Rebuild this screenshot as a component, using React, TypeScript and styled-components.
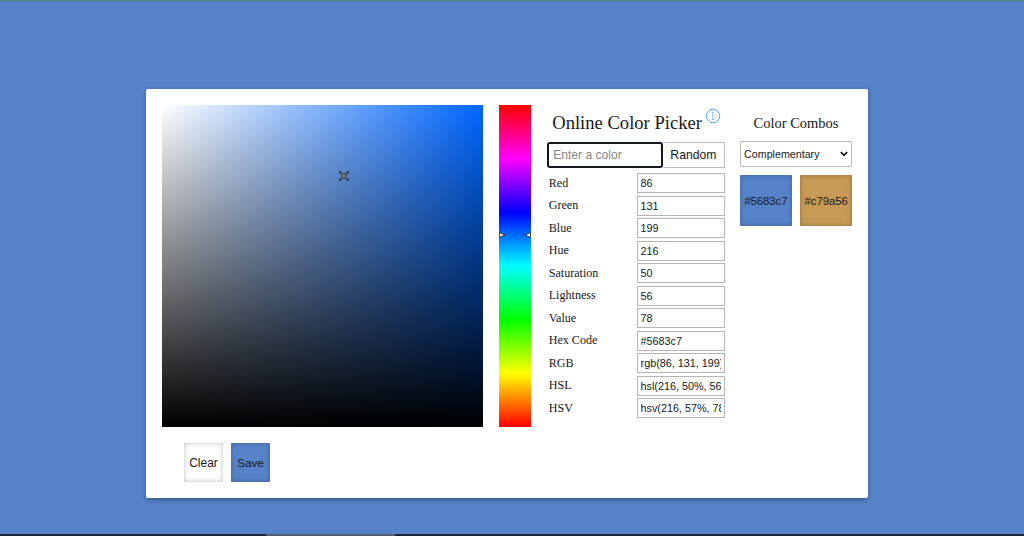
import React from 'react';
import styled, { createGlobalStyle } from 'styled-components';

const sans = '"Liberation Sans", Arial, sans-serif';
const serif = '"Liberation Serif", "Times New Roman", serif';

const GlobalStyle = createGlobalStyle`
  * { box-sizing: border-box; }
  body { margin: 0; background: #5683c7; overflow: hidden; }
`;

const Page = styled.div`
  display: flex;
  flex-direction: column;
  width: 1024px;
  height: 536px;
  border-top: 1px solid #4b8777;
  background: #5683c7;
  color: #181818;
  font-family: ${serif};
`;

const Main = styled.main`
  flex: 1;
  padding: 88.4px 0 0 145.5px;
`;

const Card = styled.section`
  width: 722.5px;
  height: 408.8px;
  padding: 16px;
  background: #fff;
  border-radius: 2px;
  box-shadow: 0 2px 5px rgba(0, 0, 0, 0.32);
`;

const Columns = styled.div`
  display: flex;
  align-items: flex-start;
`;

const Shade = styled.div`
  position: relative;
  width: 321.7px;
  height: 322px;
  margin-right: 16.5px;
  background: linear-gradient(to top, #000, transparent), linear-gradient(to right, #fff, #0066ff);
`;

const Cross = styled.svg`
  position: absolute;
  left: 176.8px;
  top: 64.2px;
`;

const Hue = styled.div`
  position: relative;
  width: 32px;
  height: 322px;
  margin-right: 15.8px;
  background: linear-gradient(#f00, #f0f 16.67%, #00f 33.33%, #0ff 50%, #0f0 66.67%, #ff0 83.33%, #f00);
`;

const HueArrows = styled.svg`
  position: absolute;
  left: 0;
  top: 125.5px;
`;

const Values = styled.div`
  width: 177.5px;
  margin-right: 15.5px;
`;

const Title = styled.h1`
  display: flex;
  align-items: flex-start;
  height: 36.6px;
  margin: 0;
  padding: 4px 0 0 5px;
  font-size: 18.6px;
  font-weight: 400;
  line-height: 28px;
  white-space: nowrap;
`;

const InfoIcon = styled.svg`
  margin: -1px 0 0 3px;
`;

const Entry = styled.div`
  display: flex;
  margin-bottom: 4px;
`;

const ColorInput = styled.input`
  width: 116px;
  height: 26px;
  padding: 0 4px;
  border: 2px solid #15171f;
  border-radius: 3px;
  outline: none;
  background: #fff;
  font: 12.1px ${sans};
  &::placeholder { color: #858585; opacity: 1; }
`;

const RandomButton = styled.button`
  flex: 1;
  height: 26px;
  padding: 0;
  border: 1px solid #bdbdbd;
  border-left: 0;
  background: #fff;
  color: #181818;
  font: 12.2px ${sans};
`;

const Row = styled.label`
  display: flex;
  align-items: center;
  justify-content: space-between;
  height: 22.51px;
  padding-left: 1.5px;
  font-size: 12.1px;
`;

const ValueInput = styled.input`
  width: 88px;
  height: 20px;
  padding: 0 3px;
  border: 1px solid #b5b5b5;
  background: #fff;
  color: #181818;
  font: 10.8px ${sans};
`;

const Combos = styled.div`
  width: 112px;
`;

const CombosTitle = styled.h2`
  height: 35.6px;
  margin: 0;
  padding-top: 8px;
  font-size: 14.5px;
  font-weight: 400;
  line-height: 20px;
  text-align: center;
`;

const Scheme = styled.div`
  display: flex;
  align-items: center;
  justify-content: space-between;
  height: 26px;
  padding: 0 3px;
  border: 1px solid #b8b8b8;
  border-radius: 1px;
  font: 10.7px ${sans};
`;

const Swatches = styled.div`
  display: flex;
  justify-content: space-between;
  margin-top: 7.8px;
`;

const Tile = styled.button<{ $color: string; $size: number; $font: number }>`
  width: ${(p) => p.$size}px;
  height: ${(p) => p.$size}px;
  padding: 0;
  border: 0;
  border-radius: 1px;
  background: ${(p) => p.$color};
  box-shadow: inset 0 0 5px rgba(0, 0, 0, 0.27);
  color: #181818;
  font: ${(p) => p.$font}px ${sans};
`;

const Actions = styled.div`
  display: flex;
  gap: 8px;
  padding: 16px 0 0 22.5px;
`;

const BottomBar = styled.footer`
  height: 2px;
  padding-left: 266px;
  background: #1b2636;
`;

const ActiveTask = styled.div`
  width: 129px;
  height: 2px;
  background: #555e6c;
`;

const values: [string, string][] = [
  ['Red', '86'],
  ['Green', '131'],
  ['Blue', '199'],
  ['Hue', '216'],
  ['Saturation', '50'],
  ['Lightness', '56'],
  ['Value', '78'],
  ['Hex Code', '#5683c7'],
  ['RGB', 'rgb(86, 131, 199)'],
  ['HSL', 'hsl(216, 50%, 56%)'],
  ['HSV', 'hsv(216, 57%, 78%)'],
];

export default function App() {
  return (
    <Page>
      <GlobalStyle />
      <Main>
        <Card>
          <Columns>
            <Shade>
              <Cross width="12" height="12" viewBox="0 0 12 12">
                <path d="M1.5 1.5l9 9M10.5 1.5l-9 9" stroke="#20262e" strokeWidth="2.3" />
                <path d="M2.5 2.5l7 7M9.5 2.5l-7 7" stroke="#a49f92" strokeWidth="1" />
              </Cross>
            </Shade>
            <Hue>
              <HueArrows width="32" height="8" viewBox="0 0 32 8">
                <path d="M0.4 1.4L6 4 0.4 6.6zM31.6 1.4L26 4 31.6 6.6z" fill="#eee" stroke="#24282c" strokeWidth="0.9" />
              </HueArrows>
            </Hue>
            <Values>
              <Title>
                Online Color Picker
                <InfoIcon width="16" height="16" viewBox="0 0 16 16" fill="none" stroke="#3d9be6">
                  <circle cx="8" cy="8" r="6.8" strokeWidth="0.9" />
                  <path d="M6.8 6.4H8v5.2M6.6 11.6h2.8" strokeWidth="0.7" />
                  <circle cx="7.9" cy="4.4" r="0.5" fill="#3d9be6" strokeWidth="0.3" />
                </InfoIcon>
              </Title>
              <Entry>
                <ColorInput placeholder="Enter a color" />
                <RandomButton>Random</RandomButton>
              </Entry>
              {values.map(([name, value]) => (
                <Row key={name}>
                  {name}
                  <ValueInput defaultValue={value} />
                </Row>
              ))}
            </Values>
            <Combos>
              <CombosTitle>Color Combos</CombosTitle>
              <Scheme>
                Complementary
                <svg width="8" height="6" viewBox="0 0 8 6" fill="none">
                  <path d="M0.8 1L4 4.3 7.2 1" stroke="#111" strokeWidth="1.7" />
                </svg>
              </Scheme>
              <Swatches>
                <Tile $color="#5683c7" $size={51.5} $font={11.3}>#5683c7</Tile>
                <Tile $color="#c79a56" $size={51.5} $font={11.3}>#c79a56</Tile>
              </Swatches>
            </Combos>
          </Columns>
          <Actions>
            <Tile $color="#fff" $size={39} $font={12}>Clear</Tile>
            <Tile $color="#5683c7" $size={39} $font={11.8}>Save</Tile>
          </Actions>
        </Card>
      </Main>
      <BottomBar>
        <ActiveTask />
      </BottomBar>
    </Page>
  );
}
